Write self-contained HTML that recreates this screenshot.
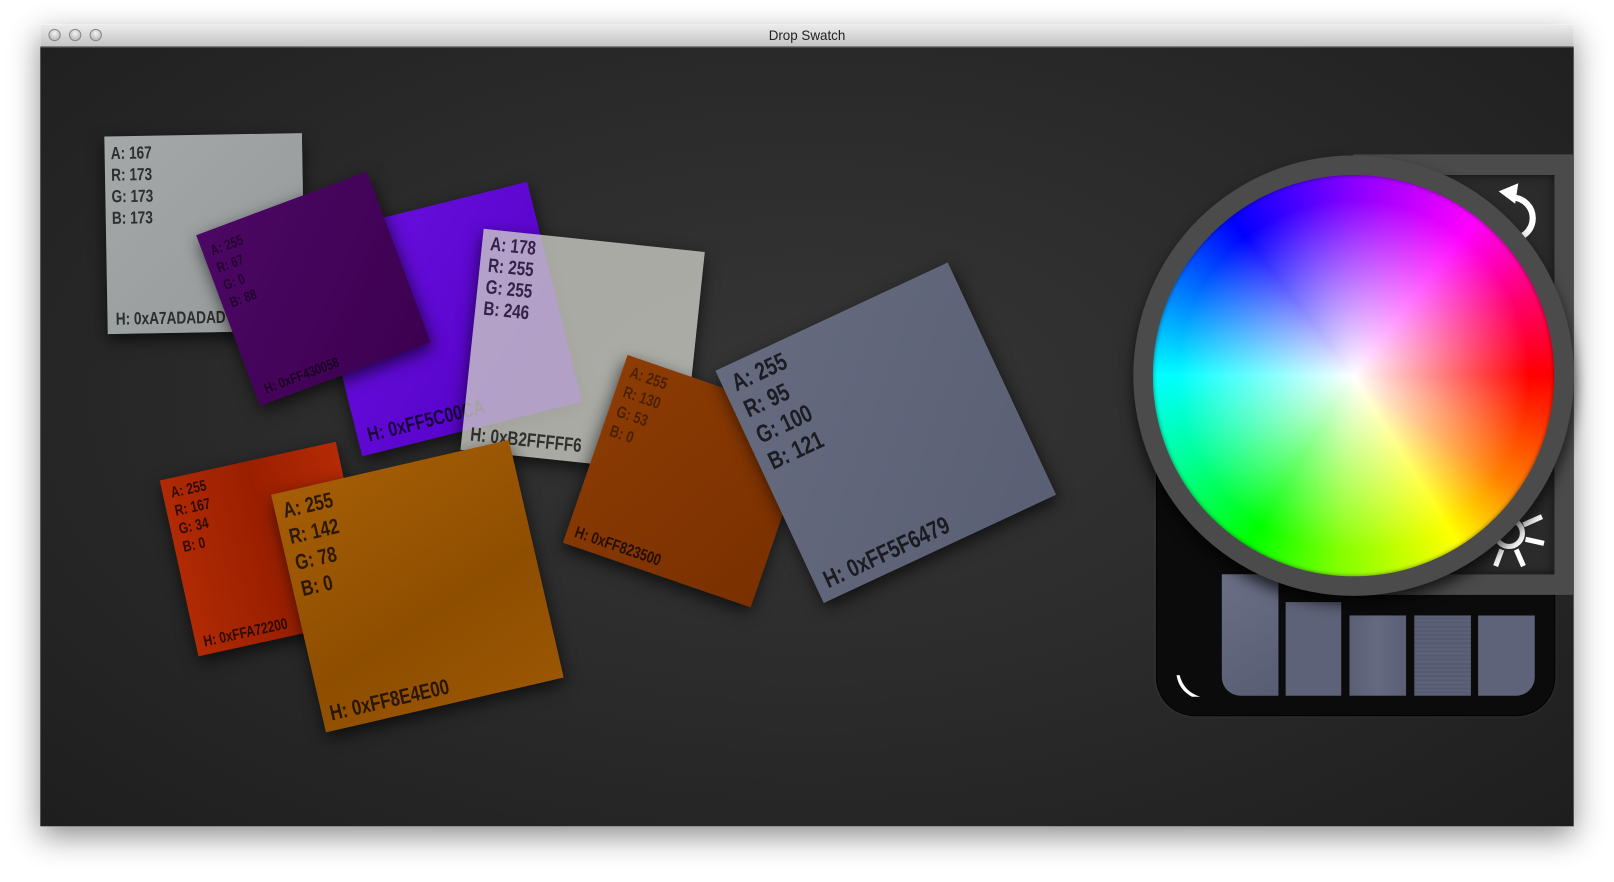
<!DOCTYPE html>
<html><head><meta charset="utf-8"><style>
html,body{margin:0;padding:0;background:#fff;width:1614px;height:882px;overflow:hidden}
.s{position:absolute;left:0;top:0;width:1568px;height:857px;transform:scale(1.02934,1.02917);transform-origin:0 0}
.win{position:absolute;left:39px;top:24px;width:1490px;height:779px;box-shadow:0 10px 28px rgba(0,0,0,.45);overflow:hidden}
.tb{position:absolute;left:0;top:0;width:100%;height:21px;background:linear-gradient(#ececec,#c4c4c4);border-bottom:1px solid #555;font:13px "Liberation Sans",sans-serif;text-align:center;line-height:21px;color:#222}
.dot{position:absolute;top:4px;width:12px;height:12px;border-radius:50%;background:radial-gradient(circle at 50% 35%,#f4f4f4,#a8a8a8);border:1px solid #888;box-sizing:border-box}
.bg{position:absolute;left:0;top:22px;width:100%;height:757px;background:radial-gradient(ellipse at 50% 45%,#363636 0%,#2c2c2c 45%,#1e1e1e 100%)}
.c{position:absolute;box-shadow:0 6px 16px rgba(0,0,0,.65);font-family:"Liberation Sans Narrow","Liberation Sans",sans-serif;font-weight:bold;color:rgba(0,0,0,.72);overflow:hidden}
.c .t,.c .h{position:absolute;white-space:pre;transform:scaleX(.78);transform-origin:0 0}
</style></head><body>
<div class="s">
<div class="win">
 <div class="tb">Drop Swatch<div class="dot" style="left:8px"></div><div class="dot" style="left:28px"></div><div class="dot" style="left:48px"></div></div>
 <div class="bg"></div>
</div>

<!-- gray -->
<div class="c" style="left:103px;top:131px;width:192px;height:192px;transform:rotate(-1deg);background:linear-gradient(135deg,#a4a8a8,#95999a)">
 <div class="t" style="left:6px;top:6px;font-size:17px;line-height:21px">A: 167
R: 173
G: 173
B: 173</div>
 <div class="h" style="left:8px;bottom:4px;font-size:17px">H: 0xA7ADADAD</div>
</div>
<!-- violet -->
<div class="c" style="left:322px;top:200px;width:220px;height:220px;transform:rotate(-14deg);background:linear-gradient(135deg,#6a10e0,#5200c4)">
 <div class="h" style="left:10px;bottom:6px;font-size:20px">H: 0xFF5C00CA</div>
</div>
<!-- dark purple -->
<div class="c" style="left:216px;top:192px;width:177px;height:177px;transform:rotate(-20.5deg);background:linear-gradient(135deg,#4c0864,#3c0050)">
 <div class="t" style="left:8px;top:10px;font-size:14px;line-height:18px;color:rgba(0,0,0,.5)">A: 255
R: 67
G: 0
B: 88</div>
 <div class="h" style="left:10px;bottom:6px;font-size:14px;color:rgba(0,0,0,.6)">H: 0xFF430058</div>
</div>
<!-- white -->
<div class="c" style="left:458px;top:233px;width:216px;height:216px;transform:rotate(6deg);background:rgba(205,205,198,.78)">
 <div class="t" style="left:8px;top:4px;font-size:19px;line-height:21px;color:rgba(20,0,40,.8)">A: 178
R: 255
G: 255
B: 246</div>
 <div class="h" style="left:8px;bottom:4px;font-size:19px">H: 0xB2FFFFF6</div>
</div>
<!-- red -->
<div class="c" style="left:172px;top:446px;width:175px;height:175px;transform:rotate(-12.4deg);background:linear-gradient(90deg,#b02a04,#9a1f00,#b52a06)">
 <div class="t" style="left:8px;top:6px;font-size:15px;line-height:18px">A: 255
R: 167
G: 34
B: 0</div>
 <div class="h" style="left:8px;bottom:4px;font-size:15px">H: 0xFFA72200</div>
</div>
<!-- orange -->
<div class="c" style="left:287px;top:451px;width:237px;height:237px;transform:rotate(-13deg);background:linear-gradient(160deg,#a65e06,#8e4e00 60%,#9a5604)">
 <div class="t" style="left:8px;top:6px;font-size:21px;line-height:26px">A: 255
R: 142
G: 78
B: 0</div>
 <div class="h" style="left:8px;bottom:4px;font-size:21px">H: 0xFF8E4E00</div>
</div>
<!-- brown -->
<div class="c" style="left:573px;top:371px;width:193px;height:193px;transform:rotate(19deg);background:linear-gradient(120deg,#8c3c04,#7a3000)">
 <div class="t" style="left:8px;top:6px;font-size:16px;line-height:20px;color:rgba(0,0,0,.45)">A: 255
R: 130
G: 53
B: 0</div>
 <div class="h" style="left:8px;bottom:4px;font-size:16px">H: 0xFF823500</div>
</div>
<!-- slate -->
<div class="c" style="left:736px;top:296px;width:249px;height:249px;transform:rotate(-25deg);background:linear-gradient(135deg,#666b80,#5a5f74)">
 <div class="t" style="left:10px;top:6px;font-size:24px;line-height:28px">A: 255
R: 95
G: 100
B: 121</div>
 <div class="h" style="left:10px;bottom:4px;font-size:24px">H: 0xFF5F6479</div>
</div>

<!-- panel -->
<div style="position:absolute;left:1123px;top:420px;width:388px;height:276px;background:#0b0b0b;border:1px solid #000;border-radius:38px;box-sizing:border-box;box-shadow:0 0 3px rgba(255,255,255,.08)"></div>
<div style="position:absolute;left:1187px;top:558px;width:55px;height:118px;background:linear-gradient(150deg,#6a6f86,#585d73);border-radius:0 0 0 18px"></div>
<div style="position:absolute;left:1249px;top:585px;width:54px;height:91px;background:#5d6278"></div>
<div style="position:absolute;left:1311px;top:598px;width:55px;height:78px;background:linear-gradient(90deg,#5a5f75,#666a80,#5a5f75)"></div>
<div style="position:absolute;left:1374px;top:598px;width:55px;height:78px;background:repeating-linear-gradient(#5c6177 0 2px,#555a70 2px 4px)"></div>
<div style="position:absolute;left:1436px;top:598px;width:55px;height:78px;background:#5e6379;border-radius:0 0 18px 0"></div>
<svg style="position:absolute;left:0;top:0" width="1568" height="857">
 <path d="M1146,656 Q1150,672 1166,677 L1158,677 Q1145,670 1143,656 Z" fill="#fff"/>
</svg>

<!-- gray frame -->
<div style="position:absolute;left:1315px;top:150px;width:214px;height:428px;background:#4b4b4b"></div>
<div style="position:absolute;left:1340px;top:170px;width:170px;height:388px;background:#2b2b2b;box-shadow:inset 0 0 10px rgba(0,0,0,.6)"></div>
<svg style="position:absolute;left:0;top:0" width="1568" height="857">
 <path d="M1468,232 A18,18 0 0 0 1470,192" fill="none" stroke="#fff" stroke-width="6"/>
 <path d="M1456,186 L1475,178 L1472,198 Z" fill="#fff"/>
 <circle cx="1466" cy="518" r="13" fill="none" stroke="#fff" stroke-width="5"/>
 <g stroke="#fff" stroke-width="5">
  <line x1="1480" y1="510" x2="1498" y2="502"/>
  <line x1="1482" y1="524" x2="1500" y2="528"/>
  <line x1="1473" y1="534" x2="1480" y2="550"/>
  <line x1="1459" y1="534" x2="1453" y2="550"/>
 </g>
</svg>
<div style="position:absolute;left:1101px;top:151px;width:428px;height:428px;border-radius:50%;background:#4b4b4b;box-shadow:0 8px 14px rgba(0,0,0,.7)"></div>
<div style="position:absolute;left:1120px;top:170px;width:390px;height:390px;border-radius:50%;background:radial-gradient(circle,#fff 0%,rgba(255,255,255,.75) 15%,rgba(255,255,255,0) 62%),conic-gradient(#8a00ff 0deg,#ff00ff 38deg,#ff0070 65deg,#ff0000 90deg,#ff8000 125deg,#ffff00 148deg,#80ff00 185deg,#00ff00 212deg,#00ffa0 245deg,#00ffff 270deg,#0080ff 295deg,#0000ff 322deg,#8a00ff 360deg);box-shadow:inset 0 0 4px rgba(0,0,0,.5)"></div>
</div>
</body></html>
